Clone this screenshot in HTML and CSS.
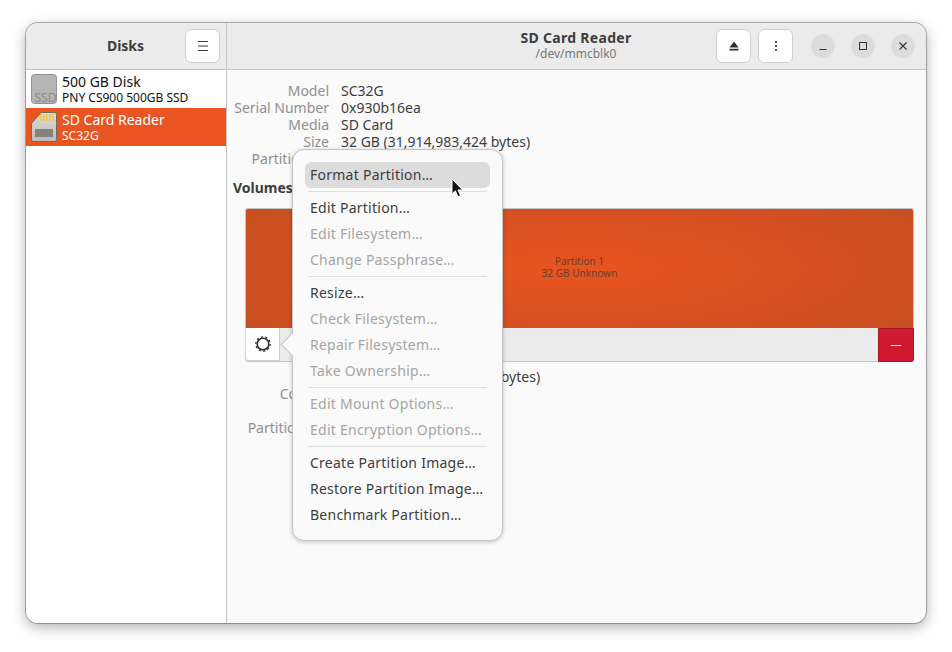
FILE: index.html
```html
<!DOCTYPE html>
<html lang="en">
<head>
<meta charset="utf-8">
<title>Disks</title>
<link rel="stylesheet" href="styles.css">
</head>
<body>
<div class="window">
  <header class="titlebar">
    <div class="side-head">
      <span class="side-title">Disks</span>
      <button class="btn">
        <svg width="16" height="16" viewBox="0 0 16 16"><path d="M3 3.500h10M3 8h10M3 12.500h10" stroke="#3d3d3d" stroke-width="1"/></svg>
      </button>
    </div>
    <div class="main-head">
      <div class="title-block">
        <div class="title">SD Card Reader</div>
        <div class="subtitle">/dev/mmcblk0</div>
      </div>
      <div class="actions">
        <button class="btn">
          <svg width="16" height="16" viewBox="0 0 16 16"><path d="M8 3.500l4.500 6h-9z M3.500 10.800h9v1.700h-9z" fill="#2d2d2d"/></svg>
        </button>
        <button class="btn">
          <svg width="16" height="16" viewBox="0 0 16 16"><path d="M8 3v2M8 7v2M8 11v2" stroke="#2d2d2d" stroke-width="1.600"/></svg>
        </button>
      </div>
      <div class="wm">
        <span class="wm-btn"><svg width="16" height="16" viewBox="0 0 16 16"><path d="M4.500 11.500h7" stroke="#333" stroke-width="1"/></svg></span>
        <span class="wm-btn"><svg width="16" height="16" viewBox="0 0 16 16"><rect x="4.500" y="4.500" width="7" height="7" fill="none" stroke="#333" stroke-width="1"/></svg></span>
        <span class="wm-btn"><svg width="16" height="16" viewBox="0 0 16 16"><path d="M4.500 4.500l7 7M11.500 4.500l-7 7" stroke="#333" stroke-width="1.100"/></svg></span>
      </div>
    </div>
  </header>
  <div class="body">
    <aside class="sidebar">
      <div class="disk">
        <svg class="disk-icon" width="28" height="30" viewBox="0 0 28 30">
          <rect x="1.500" y="0.500" width="25" height="29" rx="3" fill="#b5b5b5" stroke="#939393"/>
          <text x="15.500" y="27.500" text-anchor="middle" class="ssd-text">SSD</text>
        </svg>
        <div>
          <div class="disk-name">500 GB Disk</div>
          <div class="disk-sub">PNY CS900 500GB SSD</div>
        </div>
      </div>
      <div class="disk selected">
        <svg class="disk-icon" width="28" height="30" viewBox="0 0 28 30">
          <defs><linearGradient id="card" x1="0" y1="0" x2="0" y2="1"><stop offset="0" stop-color="#dedcd8"/><stop offset="1" stop-color="#bdbbb6"/></linearGradient></defs>
          <path d="M11 0.500h13.500a2 2 0 0 1 2 2v25a2 2 0 0 1-2 2h-21a2 2 0 0 1-2-2v-16z" fill="url(#card)" stroke="#6f6c67"/>
          <path d="M10 2h1.800v7h-1.800zM13 2h1.800v7h-1.800zM16 2h1.800v7h-1.800zM19 2h1.800v7h-1.800zM22 2h1.800v7h-1.800z" fill="#f0c64a"/>
          <rect x="5" y="17" width="18" height="8" fill="#85827d"/>
        </svg>
        <div>
          <div class="disk-name">SD Card Reader</div>
          <div class="disk-sub">SC32G</div>
        </div>
      </div>
    </aside>
    <main class="content">
      <dl class="info">
        <dt>Model</dt><dd>SC32G</dd>
        <dt>Serial Number</dt><dd>0x930b16ea</dd>
        <dt>Media</dt><dd>SD Card</dd>
        <dt>Size</dt><dd>32 GB (31,914,983,424 bytes)</dd>
        <dt>Partitioning</dt><dd></dd>
      </dl>
      <h2 class="volumes">Volumes</h2>
      <div class="volume-box">
        <div class="partition">
          <div>Partition 1</div>
          <div>32 GB Unknown</div>
        </div>
        <div class="toolbar">
          <button class="tool-gear">
            <svg width="18" height="18" viewBox="0 0 18 18"><circle cx="9" cy="9" r="7.200" fill="none" stroke="#2d2d2d" stroke-width="1.300" stroke-dasharray="2 2.520"/><circle cx="9" cy="9" r="5.800" fill="none" stroke="#2d2d2d" stroke-width="1.600"/></svg>
          </button>
          <span class="tool-fill"></span>
          <button class="tool-del"><span class="minus"></span></button>
        </div>
      </div>
      <dl class="info info-lower">
        <dt>Size</dt><dd>32 GB (31,914,983,424 bytes)</dd>
        <dt>Contents</dt><dd></dd>
        <dt></dt><dd></dd>
        <dt>Partition Type</dt><dd></dd>
      </dl>
    </main>
  </div>

  <div class="popover">
    <span class="arrow"></span>
    <div class="item active">Format Partition…</div>
    <hr>
    <div class="item">Edit Partition…</div>
    <div class="item off">Edit Filesystem…</div>
    <div class="item off">Change Passphrase…</div>
    <hr>
    <div class="item">Resize…</div>
    <div class="item off">Check Filesystem…</div>
    <div class="item off">Repair Filesystem…</div>
    <div class="item off">Take Ownership…</div>
    <hr>
    <div class="item off">Edit Mount Options…</div>
    <div class="item off">Edit Encryption Options…</div>
    <hr>
    <div class="item">Create Partition Image…</div>
    <div class="item">Restore Partition Image…</div>
    <div class="item">Benchmark Partition…</div>
  </div>

  <svg class="cursor" width="14" height="21" viewBox="0 0 14 21"><path d="M1 1v15l3.400-3.200 2.500 6 2.600-1.100-2.500-5.700h4.700z" fill="#111" stroke="#fff" stroke-width="1"/></svg>
</div>
</body>
</html>
```

FILE: styles.css
```css
* { box-sizing: border-box; }
html, body { height: 100%; }
body {
  margin: 0;
  padding: 23px 26px 0;
  background: #fff;
  font-family: "Noto Sans", "Liberation Sans", sans-serif;
  font-size: 14px;
  color: #3d3d3d;
  overflow: hidden;
}
.window {
  position: relative;
  width: 900px;
  height: 600px;
  border-radius: 12px;
  background: #fafafa;
  box-shadow: 0 0 0 1px rgba(0,0,0,.28), 0 4px 14px rgba(0,0,0,.32);
  display: flex;
  flex-direction: column;
}
.titlebar {
  display: flex;
  height: 47px;
  flex: none;
  background: #ebebeb;
  border-bottom: 1px solid #c4c4c4;
  border-radius: 12px 12px 0 0;
}
.side-head {
  width: 201px;
  flex: none;
  display: flex;
  align-items: center;
  padding-right: 6px;
  padding-bottom: 1px;
  border-right: 1px solid #c4c4c4;
}
.side-title {
  flex: 1;
  text-align: center;
  font-weight: 700;
  font-size: 14px;
  color: #3d3d3d;
  padding-left: 40px;
  padding-bottom: 1px;
}
.btn {
  width: 35px;
  height: 34px;
  padding: 0;
  display: flex;
  align-items: center;
  justify-content: center;
  background: #fff;
  border: 1px solid #cfcfcf;
  border-radius: 6px;
}
.main-head {
  flex: 1;
  display: flex;
  align-items: center;
  position: relative;
  padding-right: 11px;
  padding-bottom: 1px;
}
.title-block {
  position: absolute;
  left: 250px;
  width: 198px;
  text-align: center;
  line-height: 16px;
}
.title { font-weight: 700; font-size: 14px; letter-spacing: .3px; color: #3d3d3d; }
.subtitle { font-size: 12px; color: #777; }
.actions {
  margin-left: auto;
  display: flex;
  gap: 7px;
  margin-right: 18px;
}
.wm { display: flex; gap: 16px; }
.wm-btn {
  width: 24px;
  height: 24px;
  border-radius: 50%;
  background: #dcdcdc;
  display: flex;
  align-items: center;
  justify-content: center;
}
.body { flex: 1; display: flex; min-height: 0; }
.sidebar {
  width: 201px;
  flex: none;
  background: #fff;
  border-right: 1px solid #c4c4c4;
  border-radius: 0 0 0 12px;
}
.disk {
  height: 38px;
  display: flex;
  align-items: center;
  gap: 4px;
  padding-left: 4px;
  color: #111;
}
.disk-icon { flex: none; }
.ssd-text { font-size: 12px; fill: #8d8d8d; }
.disk-name { font-size: 14px; line-height: 17px; }
.disk-sub { font-size: 12px; line-height: 15px; }
.selected { background: #e95420; color: #fff; }
.content {
  flex: 1;
  padding: 12px 12px 0 18px;
  border-radius: 0 0 12px 0;
}
.info {
  margin: 0 0 0 -11px;
  display: grid;
  grid-template-columns: 95px 1fr;
  column-gap: 12px;
  grid-auto-rows: 17px;
  line-height: 17px;
}
.info dt { color: #8f8f8f; white-space: nowrap; direction: rtl; }
.info dd { margin: 0; color: #3d3d3d; white-space: nowrap; }
.volumes {
  margin: 12px 0 0 -12px;
  font-size: 14px;
  line-height: 17px;
  font-weight: 700;
  color: #3d3d3d;
}
.volume-box { margin-top: 12px; }
.partition {
  height: 120px;
  padding-bottom: 2px;
  border: 1px solid #c4c4c4;
  border-bottom: 0;
  border-radius: 3px 3px 0 0;
  background: radial-gradient(ellipse 65% 90% at 50% 50%, #e95420 0%, #d95021 50%, #c54f22 100%);
  display: flex;
  flex-direction: column;
  align-items: center;
  justify-content: center;
  font-size: 10px;
  letter-spacing: .05px;
  line-height: 11.500px;
  color: #683f2c;
}
.toolbar {
  height: 34px;
  display: flex;
  background: #ebebeb;
  border-bottom: 1px solid #c8c8c8;
  border-radius: 0 0 3px 3px;
}
.tool-gear {
  width: 35px;
  padding: 0;
  display: flex;
  align-items: center;
  justify-content: center;
  background: #fff;
  border: 1px solid #cfcfcf;
  border-top: 0;
  border-radius: 0 0 0 3px;
}
.tool-fill { flex: 1; }
.tool-del {
  width: 36px;
  height: 34px;
  padding: 0;
  background: #d11a31;
  border: 1px solid #a51526;
  border-radius: 0 0 3px 0;
  display: flex;
  align-items: center;
  justify-content: center;
}
.minus { width: 10px; height: 1px; background: #fff; }
.info-lower {
  margin-top: 6px;
  grid-template-columns: 105px 1fr;
  column-gap: 12px;
}
.popover {
  position: absolute;
  left: 266px;
  top: 126px;
  width: 211px;
  height: 392px;
  padding: 12px 12px 0;
  background: #fafafa;
  border: 1px solid #c4c4c4;
  border-radius: 12px;
  box-shadow: 0 1px 4px rgba(0,0,0,.22);
}
.arrow {
  position: absolute;
  left: -9px;
  top: 186px;
  width: 17px;
  height: 17px;
  transform: rotate(45deg);
  background: #fafafa;
  border-left: 1px solid #c4c4c4;
  border-bottom: 1px solid #c4c4c4;
}
.item {
  position: relative;
  height: 26px;
  line-height: 25px;
  padding-left: 5px;
  letter-spacing: .25px;
  color: #3d3d3d;
  white-space: nowrap;
}
.active { background: #dcdcdc; border-radius: 6px; }
.off { color: #a5a5a5; }
.popover hr {
  margin: 3px 3px;
  height: 1px;
  border: 0;
  background: #dedede;
}
.cursor {
  position: absolute;
  left: 425px;
  top: 155px;
}
```
